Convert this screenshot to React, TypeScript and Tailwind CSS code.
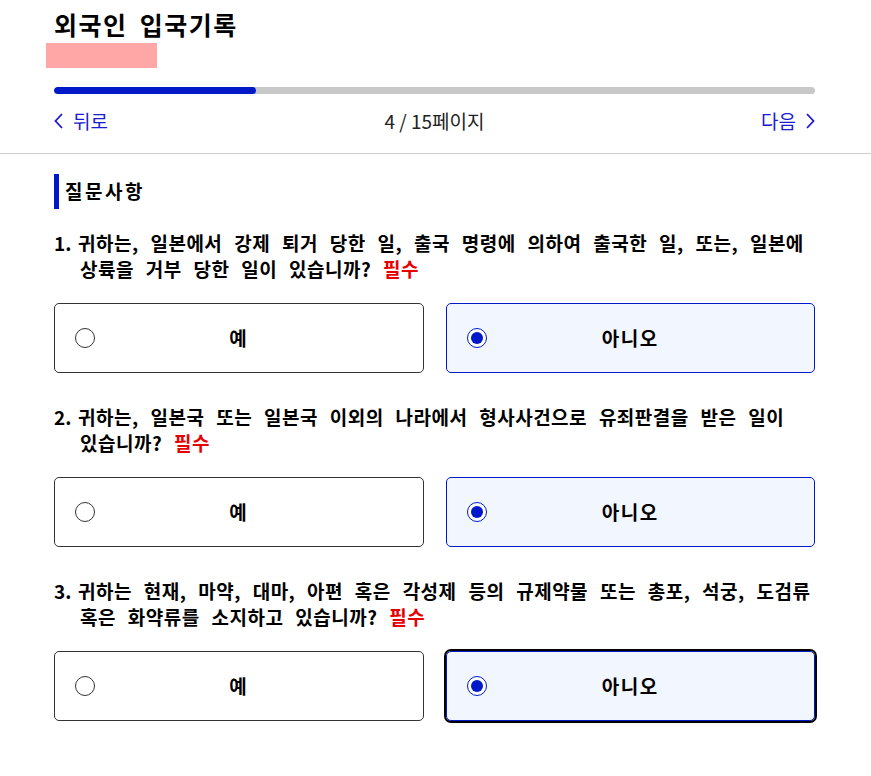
import React, { useState } from "react";

const FONT = { fontFamily: '"Noto Sans CJK KR", "Noto Sans", sans-serif' };

type Q = { id: number; lines: string[] };

const QUESTIONS: Q[] = [
  {
    id: 1,
    lines: [
      "귀하는, 일본에서 강제 퇴거 당한 일, 출국 명령에 의하여 출국한 일, 또는, 일본에",
      "상륙을 거부 당한 일이 있습니까?",
    ],
  },
  {
    id: 2,
    lines: [
      "귀하는, 일본국 또는 일본국 이외의 나라에서 형사사건으로 유죄판결을 받은 일이",
      "있습니까?",
    ],
  },
  {
    id: 3,
    lines: [
      "귀하는 현재, 마약, 대마, 아편 혹은 각성제 등의 규제약물 또는 총포, 석궁, 도검류",
      "혹은 화약류를 소지하고 있습니까?",
    ],
  },
];

function Radio({ checked }: { checked: boolean }) {
  return checked ? (
    <span className="w-[20px] h-[20px] rounded-full border-[1.5px] border-[#0019c8] bg-white flex items-center justify-center">
      <span className="block w-[12px] h-[12px] rounded-full bg-[#0019c8]" />
    </span>
  ) : (
    <span className="block w-[20px] h-[20px] rounded-full border border-[#333] bg-white" />
  );
}

function Option({
  label,
  checked,
  focused,
  onClick,
}: {
  label: string;
  checked: boolean;
  focused?: boolean;
  onClick: () => void;
}) {
  return (
    <button
      onClick={onClick}
      className={
        "relative h-[70px] rounded-[5px] flex items-center " +
        (checked
          ? "bg-[#f1f6ff] border border-[#0019c8] " +
            (focused ? "outline-2 outline-black" : "")
          : "bg-white border border-[#333]")
      }
    >
      <span className="absolute left-[20px] top-1/2 -translate-y-1/2">
        <Radio checked={checked} />
      </span>
      <span className="flex-1 text-center text-[19px] font-bold text-black tracking-[1.5px]">
        {label}
      </span>
    </button>
  );
}

export default function App() {
  const [answers, setAnswers] = useState<Record<number, boolean>>({
    1: false,
    2: false,
    3: false,
  });

  return (
    <div className="w-[871px] min-h-[776px] bg-white text-black" style={FONT}>
      <header className="pl-[54px] pr-[56px] pt-[6px]">
        <h1 className="text-[25px] font-bold leading-[36px] tracking-[1.5px] [word-spacing:5px]">
          외국인 입국기록
        </h1>
        <div className="-ml-[8px] mt-[1px] w-[111px] h-[25px] bg-[#ffa6a6]" />
        <div className="mt-[19px] h-[7px] rounded-full bg-[#c8c8c8] overflow-hidden">
          <div className="h-full w-[202px] rounded-full bg-[#0019c8]" />
        </div>
        <div className="mt-[12px] h-[30px] flex items-center justify-between text-[19px]">
          <button className="flex items-center gap-[10px] text-[#1a1ad0]">
            <svg width="9" height="16" viewBox="0 0 9 16" fill="none" stroke="currentColor" strokeWidth="1.8">
              <path d="M8 1 L1.5 8 L8 15" />
            </svg>
            뒤로
          </button>
          <span className="text-[19px] text-[#222]">4 / 15페이지</span>
          <button className="flex items-center gap-[10px] text-[#1a1ad0]">
            다음
            <svg width="9" height="16" viewBox="0 0 9 16" fill="none" stroke="currentColor" strokeWidth="1.8">
              <path d="M1 1 L7.5 8 L1 15" />
            </svg>
          </button>
        </div>
      </header>
      <div className="mt-[17px] border-t border-[#cccccc]" />

      <main className="pl-[54px] pr-[56px] pt-[20px] pb-[40px]">
        <div className="flex items-center border-l-[5px] border-[#0019c8] h-[35px] pl-[6px]">
          <h2 className="text-[19px] font-bold tracking-[2.5px]">질문사항</h2>
        </div>

        {QUESTIONS.map((q, i) => (
          <section key={q.id} className={i === 0 ? "mt-[21px]" : "mt-[31px]"}>
            <div className="flex text-[19px] font-bold leading-[26px] whitespace-nowrap">
              <span className="w-[24px] shrink-0">{q.id}.</span>
              <p className="tracking-[0.5px] [word-spacing:7px]">
                {q.lines[0]}
                <br />
                <span className="pl-[2px]">
                  {q.lines[1]} <span className="text-[#e60000]">필수</span>
                </span>
              </p>
            </div>
            <div className="mt-[21px] grid grid-cols-2 gap-[22px]">
              <Option
                label="예"
                checked={answers[q.id] === true}
                onClick={() => setAnswers({ ...answers, [q.id]: true })}
              />
              <Option
                label="아니오"
                checked={answers[q.id] === false}
                focused={q.id === 3}
                onClick={() => setAnswers({ ...answers, [q.id]: false })}
              />
            </div>
          </section>
        ))}
      </main>
    </div>
  );
}
